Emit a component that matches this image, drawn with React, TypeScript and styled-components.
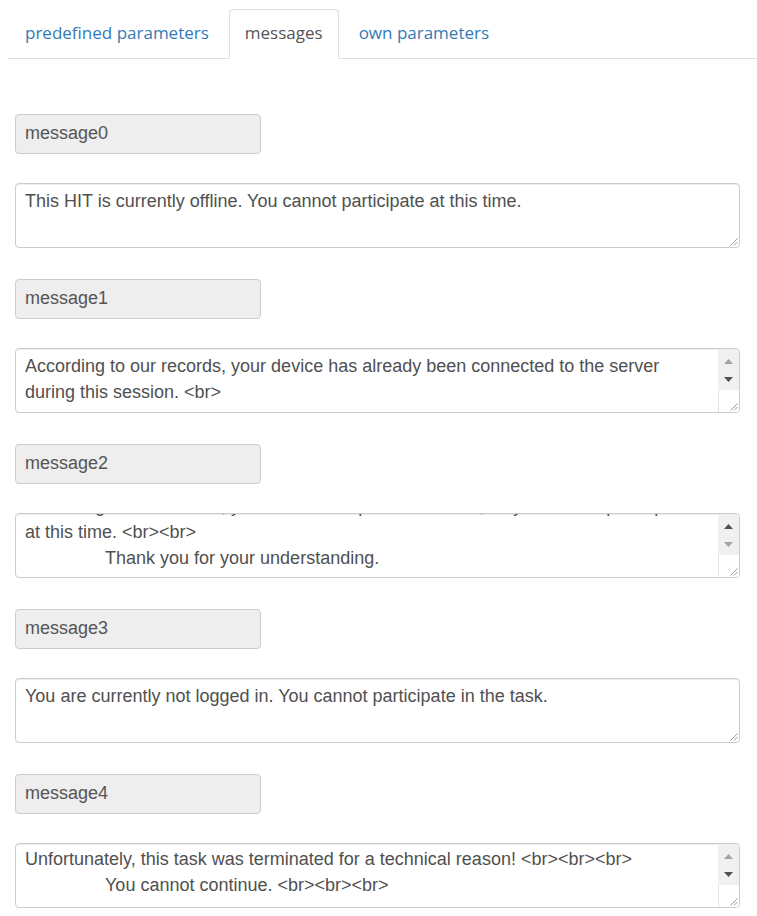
import React, { useLayoutEffect, useRef } from 'react';
import styled, { createGlobalStyle } from 'styled-components';

const GlobalStyle = createGlobalStyle`
  html, body { margin: 0; padding: 0; background: #fff; }
  body { font-family: "Liberation Sans", Arial, sans-serif; }
`;

const Page = styled.div`
  padding-top: 9px;
`;

const Tabs = styled.ul`
  display: flex;
  list-style: none;
  margin: 0 0 0 8px;
  padding: 0 0 0 1px;
  border-bottom: 1px solid #ddd;
`;

const Tab = styled.li<{ $active?: boolean }>`
  margin: 0 4px -1px 0;
  padding: 0 15px;
  height: 48px;
  line-height: 46px;
  font-family: "Open Sans", sans-serif;
  font-size: 17px;
  color: ${(p) => (p.$active ? '#555' : '#337ab7')};
  background: ${(p) => (p.$active ? '#fff' : 'transparent')};
  border: 1px solid ${(p) => (p.$active ? '#ddd' : 'transparent')};
  border-bottom-color: ${(p) => (p.$active ? '#fff' : 'transparent')};
  border-radius: 4px 4px 0 0;
  cursor: pointer;
`;

const Form = styled.div`
  padding: 55px 17px 0 15px;
  display: flex;
  flex-direction: column;
`;

const Label = styled.div`
  box-sizing: border-box;
  width: 246px;
  height: 40px;
  padding: 0 9px;
  margin-bottom: 29px;
  line-height: 37px;
  font-size: 18px;
  color: #555;
  background: #eee;
  border: 1px solid #ccc;
  border-radius: 4px;
`;

const Field = styled.div`
  position: relative;
  box-sizing: border-box;
  display: flex;
  height: 65px;
  margin-bottom: 31px;
  background: #fff;
  border: 1px solid #ccc;
  border-radius: 4px;
  box-shadow: inset 0 1px 1px rgba(0, 0, 0, 0.075);
  overflow: hidden;
`;

const TextArea = styled.textarea`
  flex: 1;
  min-width: 0;
  box-sizing: border-box;
  height: 100%;
  margin: 0;
  padding: 4px 9px 6px 9px;
  border: none;
  outline: none;
  resize: none;
  overflow: hidden;
  background: transparent;
  font-family: "Liberation Sans", Arial, sans-serif;
  font-size: 18px;
  line-height: 26px;
  color: #505050;
  tab-size: 8;
`;

const Scrollbar = styled.div`
  width: 21px;
  display: flex;
  flex-direction: column;
  flex-shrink: 0;
`;

const Track = styled.div`
  flex: 1;
  display: flex;
  flex-direction: column;
  padding-top: 3px;
  background: #f0f0f0;
`;

const Arrow = styled.div`
  height: 18px;
  display: flex;
  align-items: center;
  justify-content: center;
`;

const Corner = styled.div`
  height: 22px;
  box-sizing: border-box;
  border-left: 1px solid #e2e2e2;
  background: #fff;
  display: flex;
  align-items: flex-end;
  justify-content: flex-end;
`;

const GripSlot = styled.div`
  position: absolute;
  right: 0;
  bottom: 0;
  display: flex;
`;

const Grip = () => (
  <svg width="10" height="10" viewBox="0 0 10 10" style={{ display: 'block', marginRight: 1, marginBottom: 1 }}>
    <line x1="9.5" y1="2.5" x2="2.5" y2="9.5" stroke="#9a9a9a" strokeWidth="1" />
    <line x1="9.5" y1="6" x2="6" y2="9.5" stroke="#9a9a9a" strokeWidth="1" />
  </svg>
);

const Triangle = ({ up, dark }: { up?: boolean; dark?: boolean }) => (
  <svg width="9" height="5" viewBox="0 0 9 5" style={{ display: 'block' }}>
    <polygon points={up ? '0,5 9,5 4.5,0' : '0,0 9,0 4.5,5'} fill={dark ? '#505050' : '#a3a3a3'} />
  </svg>
);

type Msg = {
  name: string;
  text: string;
  scroll?: 'bottom' | number;
  upDark?: boolean;
  downDark?: boolean;
};

const messages: Msg[] = [
  { name: 'message0', text: 'This HIT is currently offline. You cannot participate at this time.' },
  {
    name: 'message1',
    text:
      'According to our records, your device has already been connected to the server during this session. <br>\n\n\t\tYou can only participate once. <br><br>\n\t\tThank you for your understanding.',
    scroll: 0,
    downDark: true,
  },
  {
    name: 'message2',
    text:
      'According to our records, you have taken part in this task, so you cannot participate\nat this time. <br><br>\n\t\tThank you for your understanding.',
    scroll: 'bottom',
    upDark: true,
  },
  { name: 'message3', text: 'You are currently not logged in. You cannot participate in the task.' },
  {
    name: 'message4',
    text:
      'Unfortunately, this task was terminated for a technical reason! <br><br><br>\n\t\tYou cannot continue. <br><br><br>\n\n\t\tPlease contact the requester if you have any questions.',
    scroll: 2,
    downDark: true,
  },
];

const MessageField = ({ msg }: { msg: Msg }) => {
  const ref = useRef<HTMLTextAreaElement>(null);
  useLayoutEffect(() => {
    const el = ref.current;
    if (!el || msg.scroll === undefined) return;
    el.scrollTop = msg.scroll === 'bottom' ? el.scrollHeight : msg.scroll;
  }, [msg.scroll]);
  const scrollable = msg.scroll !== undefined;
  return (
    <Field>
      <TextArea ref={ref} defaultValue={msg.text} spellCheck={false} />
      {scrollable ? (
        <Scrollbar>
          <Track>
            <Arrow>
              <Triangle up dark={msg.upDark} />
            </Arrow>
            <Arrow>
              <Triangle dark={msg.downDark} />
            </Arrow>
          </Track>
          <Corner>
            <Grip />
          </Corner>
        </Scrollbar>
      ) : (
        <GripSlot>
          <Grip />
        </GripSlot>
      )}
    </Field>
  );
};

export default function App() {
  return (
    <Page>
      <GlobalStyle />
      <Tabs>
        <Tab>predefined parameters</Tab>
        <Tab $active>messages</Tab>
        <Tab>own parameters</Tab>
      </Tabs>
      <Form>
        {messages.map((m) => (
          <React.Fragment key={m.name}>
            <Label>{m.name}</Label>
            <MessageField msg={m} />
          </React.Fragment>
        ))}
      </Form>
    </Page>
  );
}
